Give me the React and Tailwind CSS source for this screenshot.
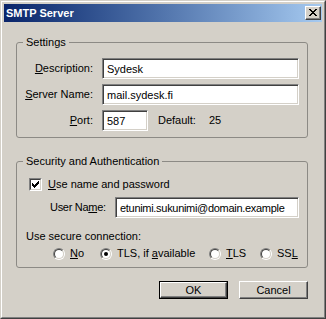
import React from "react";

// Pixel-art glyphs for the classic window chrome
const CloseGlyph = () => (
  <svg width="8" height="7" viewBox="0 0 8 7" shapeRendering="crispEdges" fill="#000">
    <rect x="0" y="0" width="2" height="1" />
    <rect x="6" y="0" width="2" height="1" />
    <rect x="1" y="1" width="2" height="1" />
    <rect x="5" y="1" width="2" height="1" />
    <rect x="2" y="2" width="4" height="1" />
    <rect x="3" y="3" width="2" height="1" />
    <rect x="2" y="4" width="4" height="1" />
    <rect x="1" y="5" width="2" height="1" />
    <rect x="5" y="5" width="2" height="1" />
    <rect x="0" y="6" width="2" height="1" />
    <rect x="6" y="6" width="2" height="1" />
  </svg>
);

const CheckGlyph = () => (
  <svg width="7" height="7" viewBox="0 0 7 7" shapeRendering="crispEdges" fill="#000">
    <rect x="6" y="0" width="1" height="1" />
    <rect x="5" y="1" width="2" height="1" />
    <rect x="0" y="2" width="1" height="1" />
    <rect x="4" y="2" width="3" height="1" />
    <rect x="0" y="3" width="2" height="1" />
    <rect x="3" y="3" width="3" height="1" />
    <rect x="0" y="4" width="5" height="1" />
    <rect x="1" y="5" width="3" height="1" />
    <rect x="2" y="6" width="1" height="1" />
  </svg>
);

const TextField = ({ value, className }) => (
  <input
    readOnly
    defaultValue={value}
    className={`h-[21px] bg-white border border-t-[#808080] border-l-[#808080] border-r-white border-b-white shadow-[inset_1px_1px_0_#404040,inset_-1px_-1px_0_#d4d0c8] pl-[4px] outline-none text-[11px] leading-[13px] ${className}`}
  />
);

const Radio = ({ checked, children, className }) => (
  <div className={`flex items-center gap-[5px] ${className}`}>
    <span className="w-[12px] h-[12px] rounded-full border border-t-[#808080] border-l-[#808080] border-r-white border-b-white flex">
      <span className="flex-1 rounded-full bg-white border border-t-[#404040] border-l-[#404040] border-r-[#d4d0c8] border-b-[#d4d0c8] flex items-center justify-center">
        {checked && <span className="w-[4px] h-[4px] rounded-full bg-black"></span>}
      </span>
    </span>
    <span>{children}</span>
  </div>
);

const Button = ({ children, isDefault }) => (
  <button
    className={`w-[69px] h-[18px] bg-[#d4d0c8] text-[11px] leading-[13px] ${
      isDefault ? "border border-black" : ""
    }`}
  >
    <span className="w-full h-full flex items-center justify-center border border-t-white border-l-white border-r-[#404040] border-b-[#404040] shadow-[inset_-1px_-1px_0_#808080]">
      {children}
    </span>
  </button>
);

export default function App() {
  return (
    <div className="w-[326px] h-[319px] bg-[#d4d0c8] border border-t-[#d4d0c8] border-l-[#d4d0c8] border-r-[#404040] border-b-[#404040] font-['Liberation_Sans',Arial,sans-serif] text-[11px] leading-[13px] text-black">
      <div className="h-full border border-t-white border-l-white border-r-[#808080] border-b-[#808080] p-[2px] flex flex-col">
        {/* Title bar */}
        <div className="h-[18px] flex items-center justify-between pl-[2px] pr-[1px] bg-gradient-to-r from-[#0a246a] to-[#a6caf0]">
          <span className="text-white font-bold">SMTP Server</span>
          <div className="w-[16px] h-[14px] bg-[#d4d0c8] border border-t-white border-l-white border-r-[#404040] border-b-[#404040] shadow-[inset_-1px_-1px_0_#808080] flex items-center justify-center pr-[1px] pb-[1px]">
            <CloseGlyph />
          </div>
        </div>

        <div className="flex-1 pl-[12px] flex flex-col">
          {/* Settings */}
          <fieldset className="mt-[14px] w-[292px] border border-[#8c8a85] rounded-[3px]">
            <legend className="ml-[6px] px-[3px]">Settings</legend>
            <div className="pt-[9px] pb-[6px] flex flex-col gap-[5px]">
              <div className="flex items-center">
                <span className="w-[76px] text-right">
                  <u>D</u>escription:
                </span>
                <TextField value="Sydesk" className="ml-[9px] w-[197px]" />
              </div>
              <div className="flex items-center">
                <span className="w-[76px] text-right">
                  <u>S</u>erver Name:
                </span>
                <TextField value="mail.sydesk.fi" className="ml-[9px] w-[197px]" />
              </div>
              <div className="flex items-center">
                <span className="w-[76px] text-right">
                  <u>P</u>ort:
                </span>
                <TextField value="587" className="ml-[9px] w-[46px]" />
                <span className="ml-[10px] w-[51px]">Default:</span>
                <span>25</span>
              </div>
            </div>
          </fieldset>

          {/* Security and Authentication */}
          <fieldset className="mt-[17px] w-[292px] border border-[#8c8a85] rounded-[3px]">
            <legend className="ml-[6px] px-[3px]">Security and Authentication</legend>
            <div className="pt-[10px] pb-[7px] flex flex-col">
              <div className="h-[13px] flex items-center pl-[12px] gap-[6px]">
                <span className="w-[13px] h-[13px] border border-t-[#808080] border-l-[#808080] border-r-white border-b-white flex">
                  <span className="flex-1 bg-white border border-t-[#404040] border-l-[#404040] border-r-[#d4d0c8] border-b-[#d4d0c8] flex items-center justify-center">
                    <CheckGlyph />
                  </span>
                </span>
                <span>
                  <u>U</u>se name and password
                </span>
              </div>
              <div className="mt-[6px] flex items-center pl-[33px]">
                <span className="w-[65px] whitespace-nowrap tracking-[-0.3px]">
                  User Na<u>m</u>e:
                </span>
                <TextField
                  value="etunimi.sukunimi@domain.example"
                  className="w-[184px] tracking-[-0.3px]"
                />
              </div>
              <div className="mt-[12px] pl-[9px]">Use secure connection:</div>
              <div className="mt-[4px] h-[13px] flex items-center pl-[36px]">
                <Radio className="w-[47px]">
                  <u>N</u>o
                </Radio>
                <Radio checked className="w-[109px]">
                  TLS, if <u>a</u>vailable
                </Radio>
                <Radio className="w-[51px]">
                  <u>T</u>LS
                </Radio>
                <Radio>
                  SS<u>L</u>
                </Radio>
              </div>
            </div>
          </fieldset>

          {/* Buttons */}
          <div className="mt-[13px] w-[292px] flex justify-end gap-[11px]">
            <Button isDefault>OK</Button>
            <Button>Cancel</Button>
          </div>
        </div>
      </div>
    </div>
  );
}
